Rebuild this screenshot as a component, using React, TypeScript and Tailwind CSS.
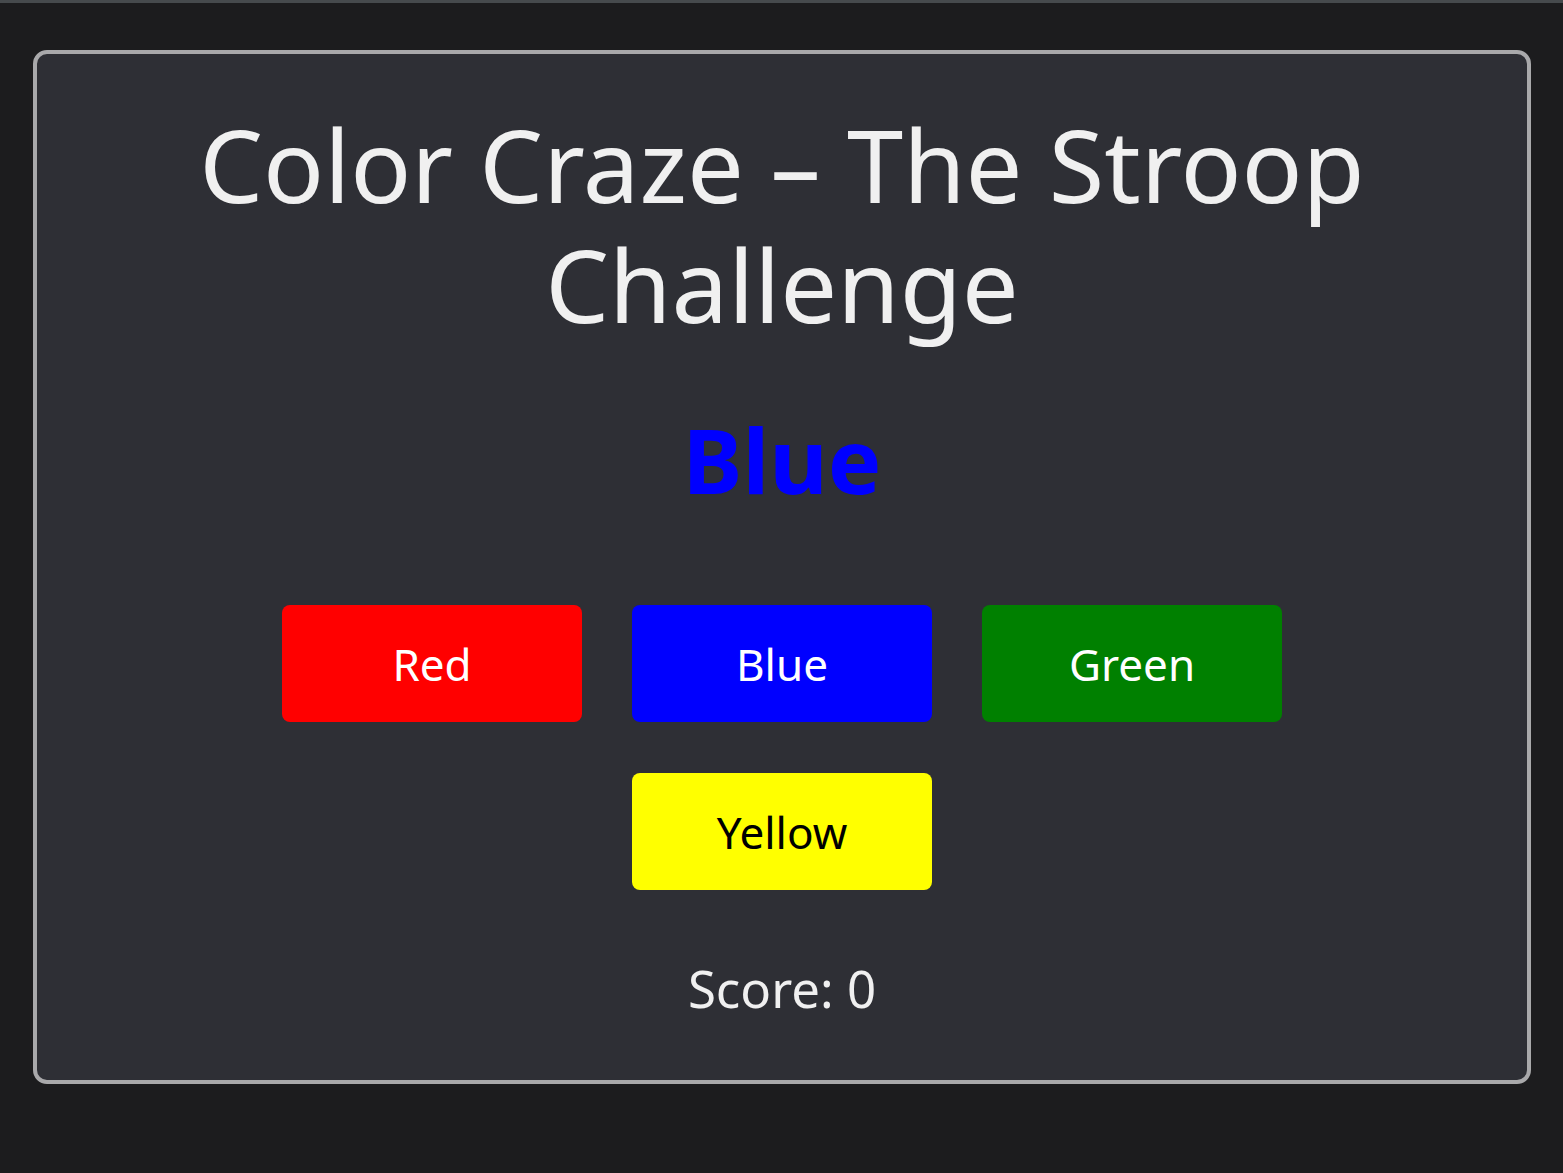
const choices = [
  { label: "Red", cls: "bg-[#ff0000] text-white" },
  { label: "Blue", cls: "bg-[#0000ff] text-white" },
  { label: "Green", cls: "bg-[#008000] text-white" },
  { label: "Yellow", cls: "bg-[#ffff00] text-black" },
];

export default function App() {
  return (
    <div
      className="min-h-screen border-t-[3px] border-[#464a4d] bg-[#1c1c1e] pt-[47px]"
      style={{ fontFamily: '"Noto Sans", sans-serif' }}
    >
      <div className="ml-[33px] mr-[32px] flex flex-col items-center rounded-[14px] border-4 border-[#a9a9ab] bg-[#2e2f35] pb-[62px] pt-[50px] text-center text-[#f0f0f0]">
        <h1 className="text-[101px] font-normal leading-[120px]">
          Color Craze – The Stroop
          <br />
          Challenge
        </h1>
        <div className="mt-[60px] text-[90px] font-bold leading-[110px] text-[#0000ff]">Blue</div>
        <div className="mt-[91px] flex w-[1000px] flex-wrap justify-center gap-x-[50px] gap-y-[51px]">
          {choices.map((c) => (
            <button
              key={c.label}
              type="button"
              className={`h-[117px] w-[300px] rounded-[8px] text-[44px] ${c.cls}`}
            >
              {c.label}
            </button>
          ))}
        </div>
        <div className="mt-[68px] text-[51px] leading-[60px]">Score: 0</div>
      </div>
    </div>
  );
}
